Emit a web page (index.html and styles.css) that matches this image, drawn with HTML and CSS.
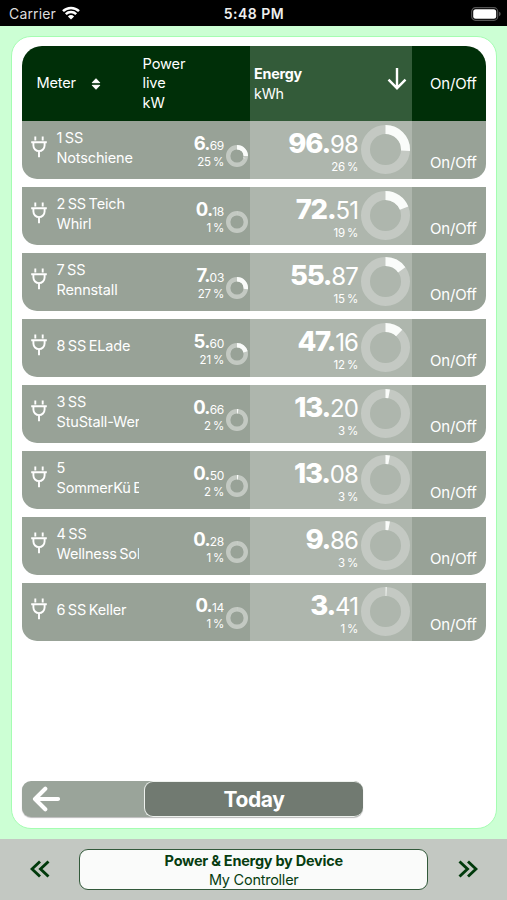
FILE: index.html
```html
<!DOCTYPE html>
<html lang="en">
<head>
<meta charset="utf-8">
<title>Power &amp; Energy by Device</title>
<link rel="stylesheet" href="styles.css">
</head>
<body>
<svg class="defs" width="0" height="0" aria-hidden="true">
  <symbol id="plug" viewBox="0 0 16 22"><path d="M4.300 .6v4M11.700 .6v4M.2 6.300h15.600M2.400 6.500v3a5.600 5.600 0 0 0 11.200 0v-3M8 15.300v5.900" fill="none" stroke="currentColor" stroke-width="1.900"/></symbol>
</svg>
<div class="screen">
  <header class="status">
    <div class="carrier">Carrier
      <svg class="wifi" viewBox="0 0 18 14" width="18" height="14"><path d="M1 5.2a11.4 11.4 0 0 1 16 0M3.8 8.2a7.4 7.4 0 0 1 10.4 0" fill="none" stroke="#fff" stroke-width="2.5"/><path d="M5.9 10.4a4.5 4.5 0 0 1 6.2 0L9 13.6z" fill="#fff"/></svg>
    </div>
    <div class="clock">5:48 PM</div>
    <svg class="battery" viewBox="0 0 30 14" width="30" height="14"><rect x=".7" y=".7" width="26" height="12.6" rx="3.8" fill="none" stroke="#555" stroke-width="1.2"/><rect x="2.2" y="2.2" width="23" height="9.6" rx="2.5" fill="#fff"/><path d="M28 4.8q1.7.6 1.7 2.2T28 9.2z" fill="#555"/></svg>
  </header>
  <main class="stage">
    <section class="card">
      <div class="table" id="table">
        <div class="row head">
          <div class="meter">Meter <svg class="sort" viewBox="0 0 10 12" width="10" height="12"><path d="M1.2 4.700L5 .7l3.800 4zM1.200 7.300L5 11.300l3.800-4z" fill="#fff" stroke="#fff" stroke-width="1" stroke-linejoin="round"/></svg></div>
          <div class="power">Power<br>live<br>kW</div>
          <div class="energy"><div><b>Energy</b><br>kWh</div><svg class="down" viewBox="0 0 20 24" width="20" height="24"><path d="M10 1v20M1.500 12.700L10 21.200l8.500-8.500" fill="none" stroke="#fff" stroke-width="2.400"/></svg></div>
          <div class="switch">On/Off</div>
        </div>
      </div>
      <div class="period">
        <div class="prev"><svg viewBox="0 0 28 26" width="28" height="26"><path d="M26 13H4M13.300 2.700L3 13l10.300 10.300" fill="none" stroke="#fff" stroke-width="4.100" stroke-linecap="round" stroke-linejoin="round"/></svg></div>
        <div class="today">Today</div>
      </div>
    </section>
  </main>
  <footer class="nav">
    <svg viewBox="0 0 20 18" width="20" height="18"><path d="M10 1.500L2 9l8 7.500M18.500 1.500L10.500 9l8 7.500" fill="none" stroke="#003a0b" stroke-width="2.900"/></svg>
    <div class="title"><b>Power &amp; Energy by Device</b><span>My Controller</span></div>
    <svg viewBox="0 0 20 18" width="20" height="18"><path d="M1.500 1.500l8 7.500-8 7.500M10 1.500L18 9l-8 7.500" fill="none" stroke="#003a0b" stroke-width="2.900"/></svg>
  </footer>
</div>
<script src="app.js"></script>
</body>
</html>
```
FILE: styles.css
```css
* { box-sizing: border-box; }
body { margin: 0; font-family: Inter, "Liberation Sans", sans-serif; font-size: 15px; color: #fff; }
.defs { display: none; }
.screen { width: 507px; height: 900px; display: flex; flex-direction: column; background: #ccffd4; overflow: hidden; }
.status { height: 25.500px; background: #000; display: grid; grid-template-columns: 1fr auto 1fr; align-items: center; padding: 2px 6px 0 9px; font-size: 14px; }
.carrier { display: flex; align-items: center; gap: 6px; letter-spacing: .15px; color: #ddd; }
.wifi { margin-top: -2px; }
.clock { font-weight: 600; font-size: 14px; letter-spacing: .5px; margin-right: 2px; color: #eee; }
.battery { justify-self: end; }
.stage { flex: 1; padding: 10.500px 10.500px 9.500px 11px; }
.card { height: 100%; background: #fff; border: 1px solid #a5fdb2; border-radius: 20px; padding: 9px 9.500px 11px 9.500px; display: flex; flex-direction: column; justify-content: space-between; }
.table { display: flex; flex-direction: column; gap: 7.500px; }
.row { display: grid; grid-template-columns: 117px 111px 162.500px 1fr; height: 58.500px; background: #98a297; border-radius: 0 0 15px 15px; overflow: hidden; line-height: 19.600px; }
.head { height: 74.500px; background: #002f08; border-radius: 20px 20px 0 0; margin-bottom: -7.500px; }
.head > div { display: flex; align-items: center; }
.head .meter { padding: 2px 0 0 15px; gap: 15px; font-size: 14.600px; letter-spacing: -.2px; }
.head .power { justify-content: flex-start; padding: 2px 0 0 4px; font-size: 14.600px; letter-spacing: -.1px; }
.head .energy { padding: 1px 5px 0 4.500px; background: #335b39; justify-content: space-between; font-size: 14.300px; letter-spacing: -.2px; }
.head .down { margin-top: -10px; }
.head .switch { padding: 1px 0 0 18px; }
.meter { display: flex; align-items: flex-start; padding-left: 9px; overflow: hidden; }
.meter .icon { width: 16px; height: 22px; margin-top: 15px; flex: none; }
.sort { margin-top: -1px; }
.name { margin-left: 10px; height: 55px; display: flex; align-items: center; font-size: 14.500px; letter-spacing: -.15px; word-spacing: -1.400px; white-space: pre; flex: 1; }
.power, .energy { display: flex; justify-content: flex-end; }
.value { text-align: right; white-space: nowrap; }
.power .value { padding-top: 13px; }
.power .ring { width: 22px; height: 22px; margin: 24.500px 1.500px 0 2px; }
.power .num { font-size: 12px; letter-spacing: -.3px; height: 19.500px; }
.power .num b { font-size: 18.500px; letter-spacing: -.8px; }
.pct { font-size: 11.500px; letter-spacing: -.2px; word-spacing: -1px; }
.energy { background: rgba(255,255,255,.22); }
.energy .value { padding-top: 8px; }
.energy .ring { width: 49px; height: 49px; margin: 4px 2px 0 3px; }
.energy .num { font-size: 24px; letter-spacing: -.9px; height: 29px; line-height: 28px; }
.energy .num b { font-size: 27.500px; letter-spacing: -1.200px; font-weight: 800; }
.ring { display: block; flex: none; transform: rotate(-90deg); fill: none; }
.switch { display: flex; align-items: flex-end; padding: 0 0 6px 18px; font-size: 15px; letter-spacing: -.2px; }
.period { width: 341.500px; height: 36px; display: flex; border-radius: 9px; background: #9aa49a; box-shadow: 0 1px 1px #bbb; overflow: hidden; }
.prev { width: 122.500px; padding: 5px 0 0 10px; }
.today { flex: 1; background: #717a71; border: 1px solid #eef2ee; border-width: 1px 0 1px 1.500px; border-radius: 9px; text-align: center; font-size: 21px; line-height: 35px; font-weight: 700; letter-spacing: -.4px; }
.nav { height: 61.500px; background: #c3c8c2; display: flex; align-items: center; justify-content: space-between; padding: 0 29px 0 29.500px; }
.title { width: 349px; height: 41.500px; border: 1.500px solid #32593a; border-radius: 9px; background: #fafbfa; color: #073d10; display: flex; flex-direction: column; align-items: center; padding-top: 1px; font-size: 14.500px; line-height: 19.500px; letter-spacing: -.25px; }
```
FILE: app.js
```js
const rows = [
  ["1 SS\nNotschiene", "6.69", 25, "96.98", 26],
  ["2 SS Teich\nWhirl", "0.18", 1, "72.51", 19],
  ["7 SS\nRennstall", "7.03", 27, "55.87", 15],
  ["8 SS ELade", "5.60", 21, "47.16", 12],
  ["3 SS\nStuStall-Wer", "0.66", 2, "13.20", 3],
  ["5\nSommerKü B", "0.50", 2, "13.08", 3],
  ["4 SS\nWellness Sol", "0.28", 1, "9.86", 3],
  ["6 SS Keller", "0.14", 1, "3.41", 1]
];

function ring(size, stroke, pct) {
  const c = size / 2, r = c - stroke / 2;
  const circle = (color, dash) =>
    `<circle cx="${c}" cy="${c}" r="${r}" stroke="${color}" stroke-width="${stroke}" ${dash}/>`;
  const faint = pct < 2 ? (size < 30 ? 0.15 : 0.75) : 1;
  return `<svg class="ring" viewBox="0 0 ${size} ${size}">` +
    circle(size < 30 ? "rgba(255,255,255,.42)" : "rgba(255,255,255,.27)", "") +
    circle("#fafcfa", `opacity="${faint}" pathLength="100" stroke-dasharray="${pct} 100"`) + `</svg>`;
}

function value(num, pct) {
  const [whole, part] = num.split(".");
  return `<div class="value"><div class="num"><b>${whole}.</b>${part}</div><div class="pct">${pct} %</div></div>`;
}

document.getElementById("table").insertAdjacentHTML("beforeend", rows.map(([name, kw, kwPct, kwh, kwhPct]) => `
  <div class="row">
    <div class="meter"><svg class="icon"><use href="#plug"/></svg><div class="name">${name}</div></div>
    <div class="power">${value(kw, kwPct)}${ring(22, 4.4, kwPct)}</div>
    <div class="energy">${value(kwh, kwhPct)}${ring(49, 9, kwhPct)}</div>
    <div class="switch">On/Off</div>
  </div>`).join(""));
```
